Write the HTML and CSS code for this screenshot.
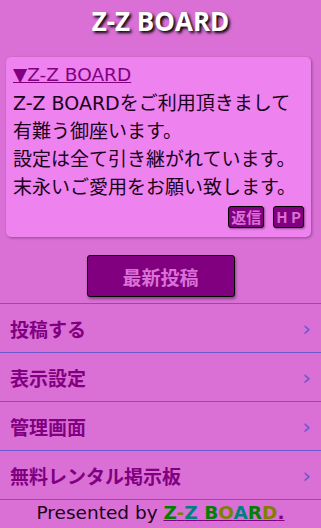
FILE: index.html
```html
<!DOCTYPE html>
<html lang="ja">
<head>
  <meta charset="UTF-8" />
  <meta name="viewport" content="width=device-width, initial-scale=1.0"/>
  <title>Z-Z BOARD</title>
  <link rel="stylesheet" href="styles.css">
</head>
<body>

  <h1 class="title">Z-Z BOARD</h1>

  <div class="notice">
    <a class="notice-link" href="#">▼Z-Z BOARD</a>
    <p class="notice-text">Z-Z BOARDをご利用頂きまして<br>有難う御座います。<br>設定は全て引き継がれています。<br>末永いご愛用をお願い致します。</p>
    <div class="notice-buttons">
      <button class="small-btn">返信</button>
      <button class="small-btn">H P</button>
    </div>
  </div>

  <div class="latest">
    <button class="latest-btn">最新投稿</button>
  </div>

  <!-- MENU -->
  <ul class="menu">
    <li class="menu-item"><span>投稿する</span><span class="chevron">›</span></li>
    <li class="menu-item"><span>表示設定</span><span class="chevron">›</span></li>
    <li class="menu-item"><span>管理画面</span><span class="chevron">›</span></li>
    <li class="menu-item"><span>無料レンタル掲示板</span><span class="chevron">›</span></li>
  </ul>

  <p class="footer">Presented by <a class="brand" href="#"><span class="c-green">Z</span><span class="c-olive">-</span><span class="c-teal">Z</span> <span class="c-green">B</span><span class="c-olive">O</span><span class="c-teal">A</span><span class="c-green">R</span><span class="c-olive">D</span><span class="c-purple">.</span></a></p>

</body>
</html>
```

FILE: styles.css
```css
body, html {
  margin: 0;
  padding: 0;
}

body {
  background: #da70d6;
  font-family: "DejaVu Sans", "Noto Sans CJK JP", sans-serif;
  color: #000;
}

.title {
  margin: 0;
  padding: 3px 0 0;
  height: 51px;
  box-sizing: border-box;
  text-align: center;
  font-size: 26px;
  font-weight: bold;
  color: #fff;
  text-shadow: 2px 2px 3px #000;
  font-family: "Open Sans", "DejaVu Sans", sans-serif;
}

.notice {
  margin: 6px 10px 0 6px;
  background: #ee82ee;
  border-radius: 5px;
  box-shadow: 1px 1px 3px rgba(0, 0, 0, 0.35);
  padding: 4px 7px 9px 7px;
}

.notice-link {
  color: #800080;
  font-size: 18.5px;
  line-height: 28px;
}

.notice-text {
  margin: 0;
  font-size: 19px;
  line-height: 28px;
  color: #1a001a;
}

.notice-buttons {
  display: flex;
  justify-content: flex-end;
  gap: 9px;
  margin-top: 5px;
}

.small-btn {
  background: #800080;
  color: #da70d6;
  border: 1px solid #000;
  border-radius: 3px;
  font-size: 15px;
  font-weight: bold;
  font-family: "Noto Sans CJK JP", sans-serif;
  padding: 0 2px;
  height: 22px;
  line-height: 18px;
  box-shadow: 1px 1px 2px rgba(0, 0, 0, 0.4);
}

.latest {
  display: flex;
  justify-content: center;
  padding: 18px 0 6px;
}

.latest-btn {
  width: 148px;
  height: 42px;
  background: #800080;
  color: #da70d6;
  border: 1px solid #000;
  border-radius: 3px;
  font-size: 19px;
  font-weight: bold;
  font-family: "Noto Sans CJK JP", sans-serif;
  box-shadow: 1px 2px 3px rgba(0, 0, 0, 0.4);
}

.menu {
  list-style: none;
  margin: 0;
  padding: 0;
  border-top: 1px solid #6a5acd;
}

.menu-item {
  display: flex;
  justify-content: space-between;
  align-items: center;
  height: 48px;
  border-bottom: 1px solid #6a5acd;
  padding: 0 10px 0 10px;
  color: #800080;
  font-size: 19px;
  font-weight: bold;
  font-family: "Noto Sans CJK JP", sans-serif;
}

.chevron {
  color: #6a5acd;
  font-size: 22px;
  font-weight: normal;
  font-family: "DejaVu Sans", sans-serif;
}

.footer {
  margin: 0;
  text-align: center;
  font-size: 18.5px;
  line-height: 26px;
  color: #1a001a;
}

.brand {
  font-weight: bold;
  text-decoration-color: #800080;
}

.c-green { color: #008000; }
.c-olive { color: #808000; }
.c-teal { color: #008080; }
.c-purple { color: #800080; }
```
